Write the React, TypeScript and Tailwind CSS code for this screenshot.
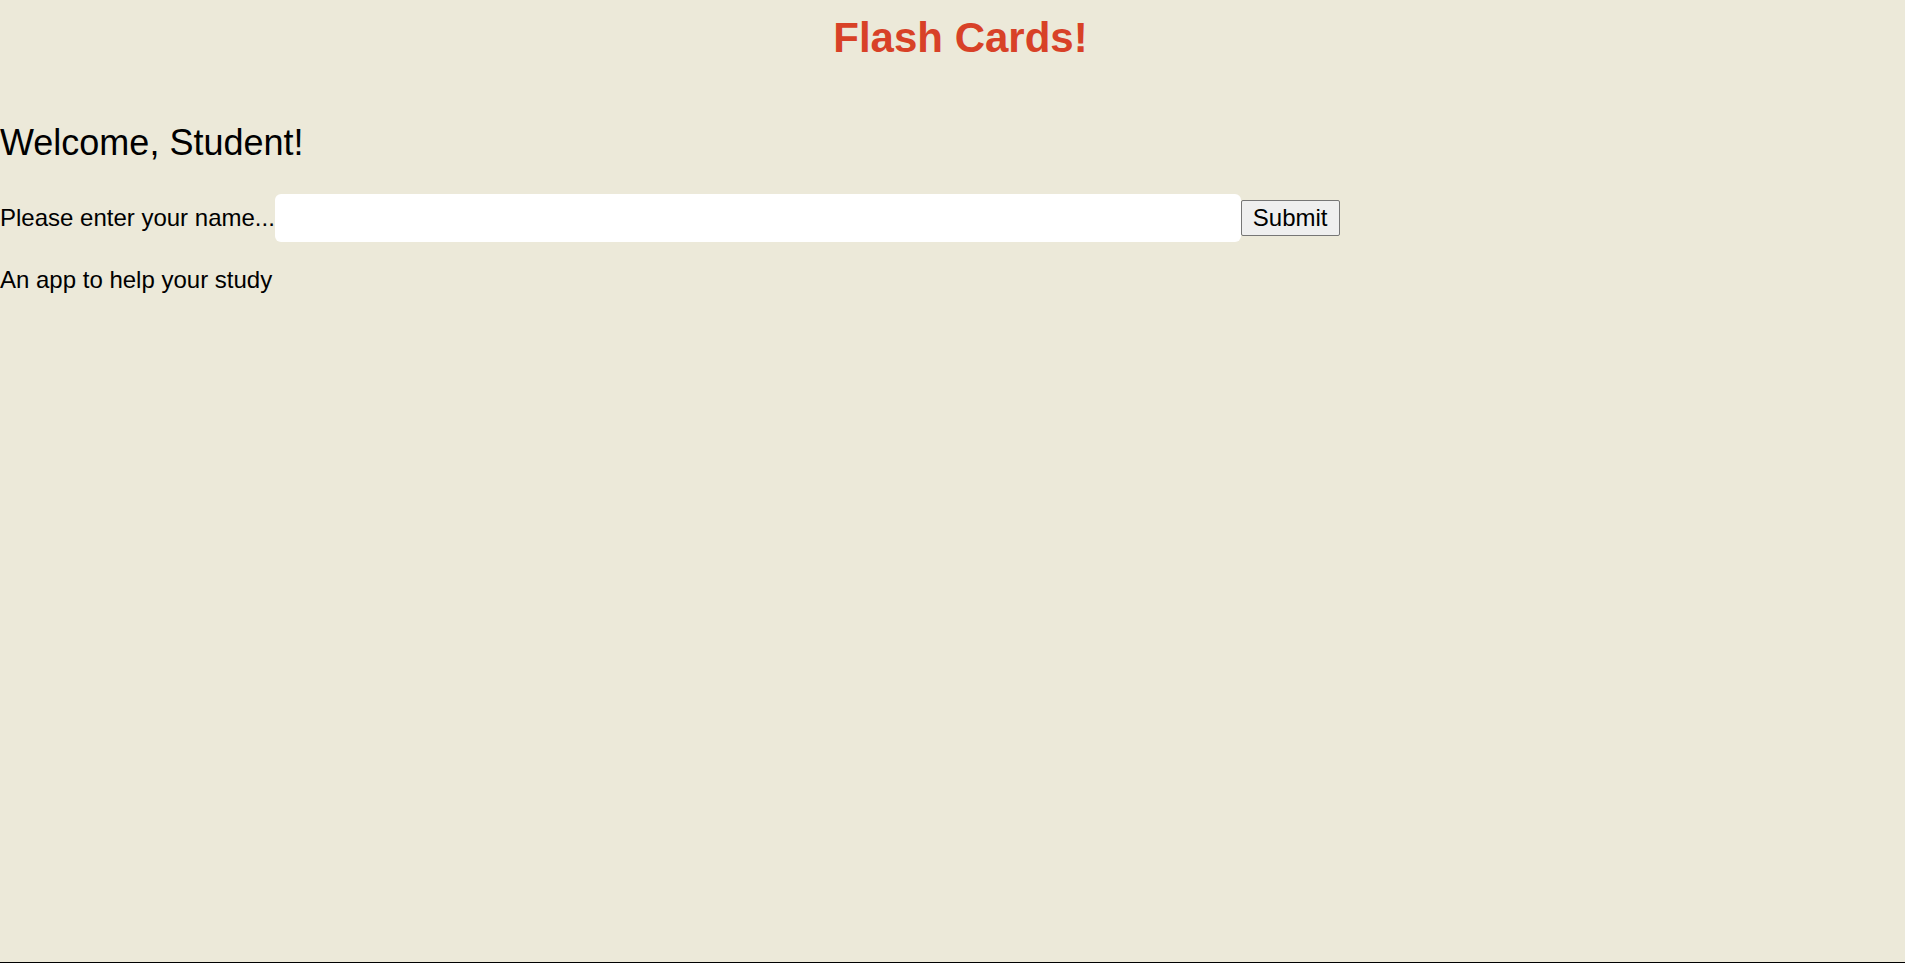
import { useState } from "react";

function App() {
    const [name, setName] = useState("");
    return (
        <div className="h-screen bg-[#ece9d9] border-b border-black text-black font-['Liberation_Sans',Arial,sans-serif] overflow-hidden">
            <h1 className="mt-[14px] pl-[16px] text-center text-[42px] leading-[48px] font-bold text-[#d84127]">Flash Cards!</h1>
            <h2 className="mt-[61px] text-[36px] leading-[40px]">Welcome, Student!</h2>
            <form className="mt-[31px] flex items-center" onSubmit={(e) => e.preventDefault()}>
                <label htmlFor="name" className="text-[24px] leading-[28px]">Please enter your name...</label>
                <input
                    id="name"
                    value={name}
                    onChange={(e) => setName(e.target.value)}
                    className="w-[966px] h-[48px] bg-white rounded-[6px] px-2 text-[20px] outline-none"
                />
                <button type="submit" className="h-[36px] px-[11px] text-[24px] leading-[28px] bg-[#efefef] border border-[#767676] rounded-[2px]">Submit</button>
            </form>
            <p className="mt-[24px] text-[24px] leading-[28px]">An app to help your study</p>
        </div>
    );
}

export default App;
